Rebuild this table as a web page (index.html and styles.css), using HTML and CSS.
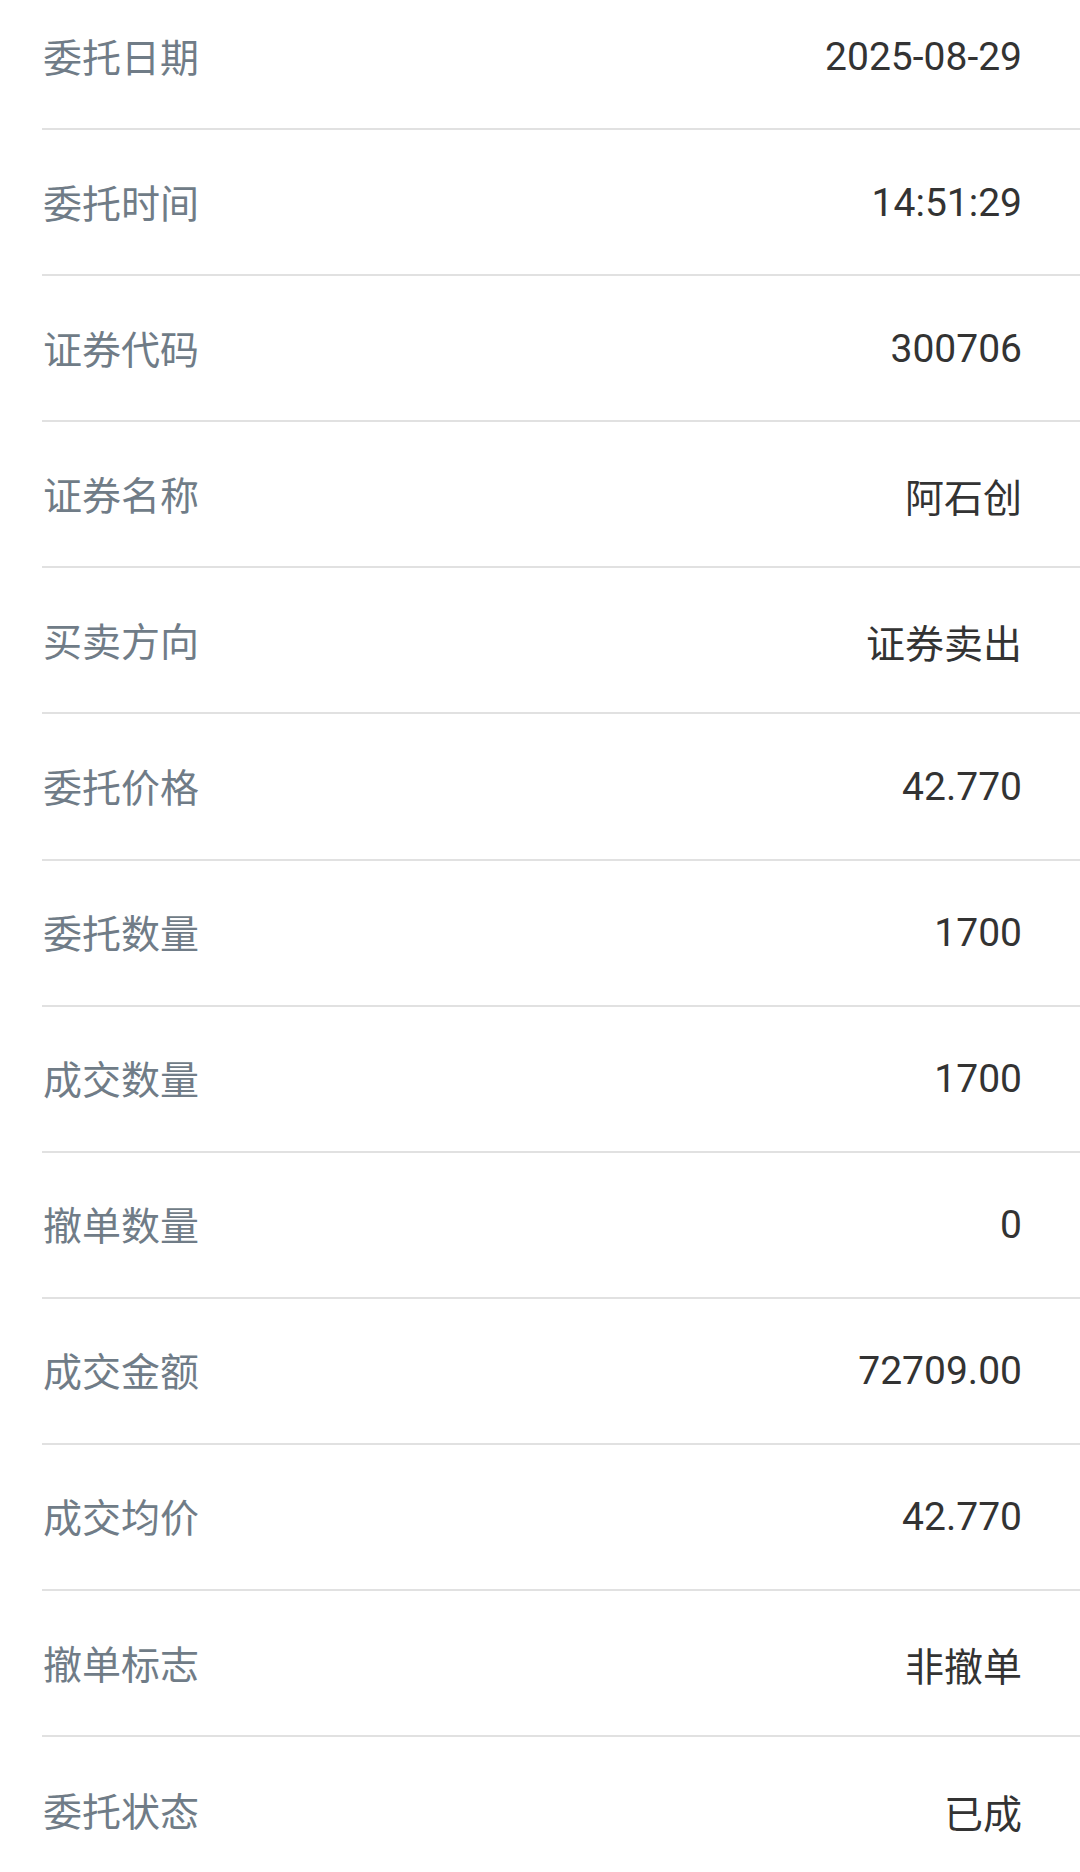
FILE: index.html
```html
<!DOCTYPE html>
<html lang="zh-CN">
<head>
<meta charset="utf-8">
<title>委托详情</title>
<link rel="stylesheet" href="styles.css">
</head>
<body>
<div class="detail-list">
  <div class="row"><span class="label">委托日期</span><span class="value">2025-08-29</span></div>
  <div class="row"><span class="label">委托时间</span><span class="value">14:51:29</span></div>
  <div class="row"><span class="label">证券代码</span><span class="value">300706</span></div>
  <div class="row"><span class="label">证券名称</span><span class="value">阿石创</span></div>
  <div class="row"><span class="label">买卖方向</span><span class="value">证券卖出</span></div>
  <div class="row"><span class="label">委托价格</span><span class="value">42.770</span></div>
  <div class="row"><span class="label">委托数量</span><span class="value">1700</span></div>
  <div class="row"><span class="label">成交数量</span><span class="value">1700</span></div>
  <div class="row"><span class="label">撤单数量</span><span class="value">0</span></div>
  <div class="row"><span class="label">成交金额</span><span class="value">72709.00</span></div>
  <div class="row"><span class="label">成交均价</span><span class="value">42.770</span></div>
  <div class="row"><span class="label">撤单标志</span><span class="value">非撤单</span></div>
  <div class="row"><span class="label">委托状态</span><span class="value">已成</span></div>
</div>
</body>
</html>
```

FILE: styles.css
```css
html, body {
  margin: 0;
  padding: 0;
  background: #ffffff;
  overflow: hidden;
}

body {
  width: 1080px;
  height: 1872px;
  font-family: Roboto, "Noto Sans CJK SC", sans-serif;
}

.detail-list {
  margin-top: -16px;
  padding-left: 42px;
}

.row {
  display: flex;
  justify-content: space-between;
  align-items: center;
  box-sizing: border-box;
  height: 146.1px;
  padding-right: 58px;
  border-bottom: 2px solid #e1e1e1;
}

.row:last-child {
  border-bottom: none;
}

.label {
  font-family: "Noto Sans CJK SC", sans-serif;
  font-size: 39px;
  color: #707c87;
  margin-left: 1px;
  padding-bottom: 3px;
}

.value {
  font-family: Roboto, "Noto Sans CJK SC", sans-serif;
  font-size: 39px;
  color: #333333;
  padding-top: 1px;
}
```
